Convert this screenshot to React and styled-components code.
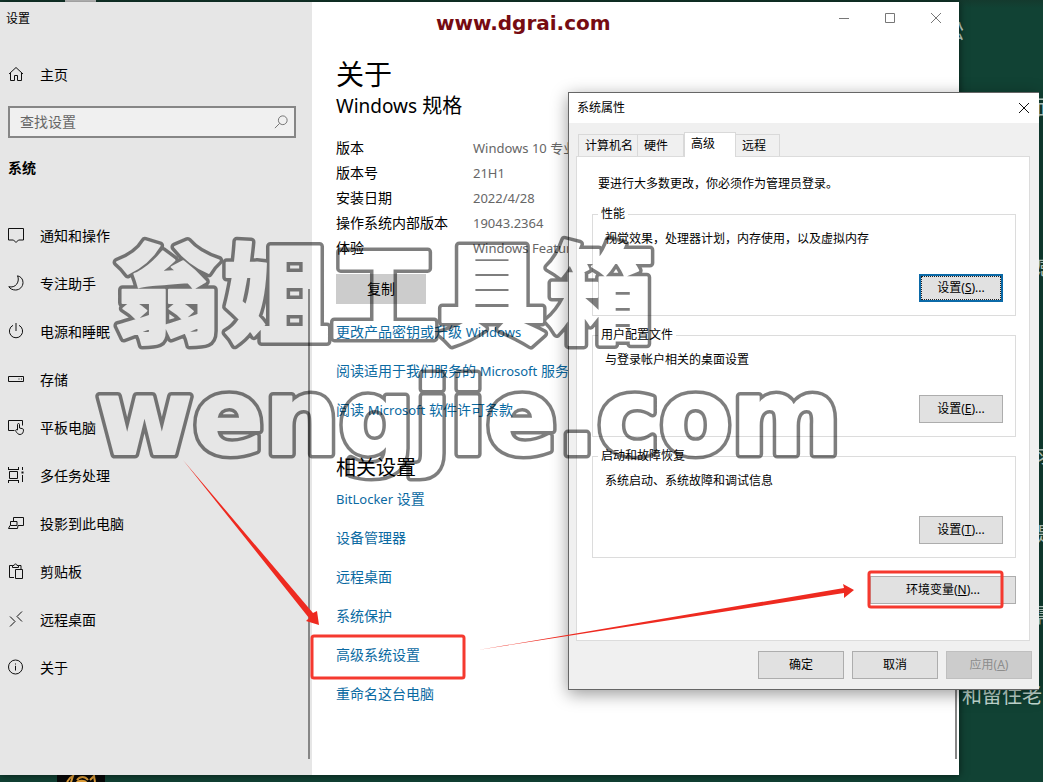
import React from "react";
import styled, { createGlobalStyle, css } from "styled-components";

const GlobalStyle = createGlobalStyle`
  *, *::before, *::after { box-sizing: border-box; }
  body {
    margin: 0;
    background: #114234;
    color: #000;
    font: 14px/20px "Noto Sans", "Noto Sans CJK SC", sans-serif;
  }
  h1, h2, p, dl, dd, ul { margin: 0; padding: 0; font-weight: 400; }
  button, input { font: inherit; color: inherit; }
`;

const Desktop = styled.div`
  position: relative;
  min-height: 100vh;
  overflow: hidden;
  background: linear-gradient(#143a2e 0, #114234 8px, #114234 100%);
`;

const DesktopLabel = styled.span`
  position: absolute;
  top: ${(p) => p.$top}px;
  left: ${(p) => p.$left}px;
  font-size: 20px;
  line-height: 24px;
  white-space: nowrap;
  color: #c4dcd3;
`;

const TopSliver = styled.div`
  position: absolute;
  top: 0;
  left: 65px;
  width: 31px;
  height: 2px;
  background: #dcdcdc;
`;

const TaskIcon = styled.svg`
  position: absolute;
  left: 57px;
  bottom: 0;
  width: 48px;
  height: 7px;
  background: #080808;
`;

const SettingsWindow = styled.section`
  position: absolute;
  top: 2px;
  left: 0;
  right: 84px;
  bottom: 7px;
  display: flex;
  background: #fff;
  box-shadow: 0 0 8px rgba(0, 0, 0, 0.6);
`;

const Sidebar = styled.aside`
  position: relative;
  flex: 0 0 312px;
  background: #e6e6e6;
`;

const ScrollThumb = styled.div`
  position: absolute;
  top: 287px;
  right: 2px;
  bottom: 16px;
  width: 2px;
  background: #868686;
`;

const WindowTitle = styled.div`
  height: 32px;
  padding-left: 6px;
  font-size: 12px;
  line-height: 34px;
`;

const NavLink = styled.a`
  display: flex;
  align-items: center;
  gap: 16px;
  height: 48px;
  padding-left: 8px;
  color: #000;
  text-decoration: none;
  svg { flex: none; margin-bottom: 2px; }
`;

const HomeRow = styled.div`
  padding: 17px 0 7px;
`;

const SearchBox = styled.label`
  display: flex;
  align-items: center;
  height: 32px;
  margin: 0 16px 0 8px;
  padding: 0 6px 0 10px;
  border: 2px solid #868686;
  background: #f0f0f0;
`;

const SearchInput = styled.input`
  flex: 1;
  min-width: 0;
  padding: 0;
  border: 0;
  outline: 0;
  background: transparent;
  &::placeholder { color: #666; opacity: 1; }
`;

const SidebarHeading = styled.h2`
  margin: 6px 0 20px;
  padding-left: 8px;
  font-size: 14px;
  font-weight: 700;
  line-height: 48px;
`;

const NavList = styled.ul`
  list-style: none;
`;

const Main = styled.main`
  position: relative;
  flex: 1;
  min-width: 0;
  overflow: hidden;
`;

const CaptionBar = styled.div`
  display: flex;
  justify-content: flex-end;
  height: 32px;
`;

const CaptionButton = styled.button`
  display: grid;
  place-items: center;
  width: 46px;
  padding: 0;
  border: 0;
  background: transparent;
`;

const Content = styled.div`
  padding: 21px 24px 0;
  white-space: nowrap;
`;

const PageTitle = styled.h1`
  font-size: 28px;
  line-height: 38px;
`;

const SectionTitle = styled.h2`
  padding-top: 2px;
  font-size: 20px;
  line-height: 22px;
`;

const SpecList = styled.dl`
  display: grid;
  grid-template-columns: 137px 1fr;
  grid-auto-rows: 25px;
  align-items: center;
  margin-top: 18px;
  dd { font-size: 13px; color: #666; }
`;

const CopyButton = styled.button`
  width: 90px;
  height: 30px;
  margin: 14px 0 8px;
  padding: 0;
  border: 0;
  background: #ccc;
`;

const LinkGroup = styled.div`
  display: flex;
  flex-direction: column;
  align-items: flex-start;
  margin-bottom: ${(p) => p.$space || 0}px;
`;

const ActionLink = styled.a`
  font-size: 14px;
  line-height: 39px;
  color: #0b6aa2;
  text-decoration: none;
`;

const Latin = styled.span`
  font-size: ${(p) => p.$size || 13}px;
  line-height: 1;
`;

const Dialog = styled.section`
  position: absolute;
  top: 92px;
  left: 568px;
  right: 4px;
  border: 1px solid #666;
  border-right: 0;
  background: #f0f0f0;
  box-shadow: 0 4px 16px rgba(0, 0, 0, 0.4);
  font-size: 12px;
  line-height: 16px;
`;

const DialogTitleBar = styled.header`
  display: flex;
  justify-content: space-between;
  align-items: center;
  height: 30px;
  padding-left: 8px;
  background: #fff;
`;

const DialogClose = styled.button`
  display: grid;
  place-items: center;
  width: 30px;
  height: 30px;
  padding: 0;
  border: 0;
  background: transparent;
`;

const Tabs = styled.div`
  display: flex;
  align-items: flex-end;
  height: 33px;
  padding-left: 9px;
`;

const Tab = styled.button`
  position: relative;
  width: ${(p) => p.$width}px;
  height: 22px;
  padding: 0 0 0 6px;
  border: 1px solid #d9d9d9;
  border-bottom: 0;
  border-left-width: ${(p) => (p.$first ? 1 : 0)}px;
  background: #f0f0f0;
  text-align: left;
  ${(p) =>
    p.$active &&
    css`
      z-index: 1;
      height: 25px;
      margin-bottom: -1px;
      padding-bottom: 2px;
      background: #fff;
    `}
`;

const Panel = styled.div`
  margin: 0 9px 0 7px;
  padding: 19px 13px 36px 15px;
  border: 1px solid #dcdcdc;
  background: #fff;
`;

const Notice = styled.p`
  margin: 0 0 14px 6px;
`;

const Group = styled.fieldset`
  min-width: 0;
  margin: 0 0 11px;
  padding: 0 12px 13px 5px;
  border: 1px solid #dcdcdc;
  legend { padding: 0 3px; }
  p { margin: 9px 0 27px 7px; }
`;

const ButtonRow = styled.div`
  display: flex;
  justify-content: flex-end;
  gap: ${(p) => p.$gap || 0}px;
  padding: ${(p) => p.$padding || 0};
`;

const PushButton = styled.button`
  width: ${(p) => p.$width}px;
  height: 28px;
  padding: 0;
  border: 1px solid #adadad;
  background: #e1e1e1;
  line-height: 16px;
  ${(p) =>
    p.$focused &&
    css`
      border: 2px solid #0b6aa8;
      outline: 1px dotted #222;
      outline-offset: -3px;
    `}
  &:disabled { border-color: #bfbfbf; background: #ccc; color: #8d8d8d; }
`;

const SiteMark = styled.div`
  position: absolute;
  top: 11px;
  left: 436px;
  font: 700 20px/24px "DejaVu Sans", sans-serif;
  color: #760b12;
`;

const Overlay = styled.svg`
  position: absolute;
  top: 0;
  left: 0;
  pointer-events: none;
`;

const Icon = ({ children, size = 16 }) => (
  <svg width={size} height={size} viewBox="0 0 16 16" fill="none" stroke="#111" strokeWidth="1" aria-hidden="true">
    {children}
  </svg>
);

const NAV = [
  ["通知和操作", <path d="M.5 1.500h15v11.500h-5L8 15.500 5.500 13h-5z" />],
  ["专注助手", <path d="M9.500.8c3.400.8 5.500 3.200 5.500 6.700 0 4.200-3.300 7.500-7.500 7.500-3 0-5.400-1.200-6.700-3.300 3 .8 6.200-.2 7.900-2.500C10.500 6.600 10.800 3.500 9.500.8z" />],
  ["电源和睡眠", <><path d="M5 2.300a6.600 6.600 0 1 0 6 0" /><path d="M8 0v8" /></>],
  ["存储", <><path d="M.5 5.500h15v5H.5z" /><path d="M10.500 8h1M13 8h1" /></>],
  ["平板电脑", <><path d="M6.500 11.500h-6v-10h14v5" /><path d="M9.500 11V5.500c0-1.300 2-1.300 2 0V9l3 .7c.8.200 1 .7 1 1.400 0 2-1 4.400-3.400 4.400-1.800 0-2.800-1-4.200-3.200-.8-1.300.5-2.300 1.600-1.300z" /></>],
  ["多任务处理", <><path d="M0 2.500h11M.5 0v2.500M10.500 0v2.500M1.500 4.500h8v7h-8zM0 13.500h11M.5 13.500V16M10.500 13.500V16M14.500 0v3M14.500 8v7" /><path d="M13.500 5.500h2" strokeWidth="2" /></>],
  ["投影到此电脑", <><path d="M5.500 6V2.500h10v8H10" /><path d="M2.500 6.500h6.500v4H2.500zM2 10.500l-1.500 3h9l.500-3" /></>],
  ["剪贴板", <><path d="M6 14.500H1.500v-12h3M10.500 2.500H13V6" /><path d="M4.500 4.500v-2H6c0-2 3-2 3 0h1.500v2zM7.500 6.500h7v9h-7z" /></>],
  ["远程桌面", <path d="M2 5.500l5 5-5 5M14 .5l-5 5 5 5" />],
  ["关于", <><circle cx="7.500" cy="8" r="7" /><path d="M7.500 6.800v4.700M7.500 4.500v1" /></>],
];

const SPECS = [
  ["版本", "Windows 10 专业版"],
  ["版本号", "21H1"],
  ["安装日期", "2022/4/28"],
  ["操作系统内部版本", "19043.2364"],
  ["体验", "Windows Feature Experience Pack"],
];

const RELATED = ["设备管理器", "远程桌面", "系统保护", "高级系统设置", "重命名这台电脑"];

const GROUPS = [
  ["性能", "视觉效果，处理器计划，内存使用，以及虚拟内存", "S"],
  ["用户配置文件", "与登录帐户相关的桌面设置", "E"],
  ["启动和故障恢复", "系统启动、系统故障和调试信息", "T"],
];

const MarkText = (props) => (
  <g strokeLinejoin="round" {...props}>
    <text x="114" y="334" fontSize="108" fontWeight="900" fontFamily="Noto Sans CJK SC, sans-serif">翁姐工具箱</text>
    <text x="96" y="454" fontSize="105" fontWeight="700" fontFamily="DejaVu Sans, sans-serif">wengjie.com</text>
  </g>
);

export default function App() {
  return (
    <Desktop>
      <GlobalStyle />
      <TopSliver />
      <DesktopLabel $top={20} $left={944}>松</DesktopLabel>
      <DesktopLabel $top={96} $left={1036}>面</DesktopLabel>
      <DesktopLabel $top={256} $left={1036}>感</DesktopLabel>
      <DesktopLabel $top={444} $left={1036}>求</DesktopLabel>
      <DesktopLabel $top={523} $left={1036}>是</DesktopLabel>
      <DesktopLabel $top={604} $left={1036}>需</DesktopLabel>
      <DesktopLabel $top={684} $left={962}>和留住老</DesktopLabel>
      <TaskIcon viewBox="0 0 48 7" aria-hidden="true">
        <path d="M10 7l3-4 3-2-2 6M20 5c3-4 8-4 11 0M33 5l4-4 1 6" fill="none" stroke="#e5a23a" strokeWidth="2" />
        <path d="M19 7c1-3 10-3 11 0z" fill="#e5a23a" />
      </TaskIcon>

      <SettingsWindow aria-label="设置">
        <Sidebar>
          <WindowTitle>设置</WindowTitle>
          <HomeRow>
            <NavLink href="#home">
              <Icon><path d="M1 8l7-6.500L15 8M2.500 7v7.500h4v-5h3v5h4V7" /></Icon>
              主页
            </NavLink>
          </HomeRow>
          <SearchBox>
            <SearchInput type="text" placeholder="查找设置" aria-label="查找设置" />
            <Icon size={14}><g stroke="#666"><circle cx="10" cy="6" r="5" /><path d="M6.500 9.500L1 15" /></g></Icon>
          </SearchBox>
          <SidebarHeading>系统</SidebarHeading>
          <NavList>
            {NAV.map(([label, icon]) => (
              <li key={label}>
                <NavLink href="#nav"><Icon>{icon}</Icon>{label}</NavLink>
              </li>
            ))}
          </NavList>
          <ScrollThumb />
        </Sidebar>

        <Main>
          <CaptionBar>
            <CaptionButton aria-label="最小化"><svg width="10" height="10" stroke="#777" fill="none"><path d="M0 5.500h10" /></svg></CaptionButton>
            <CaptionButton aria-label="最大化"><svg width="10" height="10" stroke="#777" fill="none"><path d="M.5.5h9v9h-9z" /></svg></CaptionButton>
            <CaptionButton aria-label="关闭"><svg width="10" height="10" stroke="#777" fill="none"><path d="M0 0l10 10M10 0L0 10" /></svg></CaptionButton>
          </CaptionBar>
          <Content>
            <PageTitle>关于</PageTitle>
            <SectionTitle><Latin $size={19}>Windows</Latin> 规格</SectionTitle>
            <SpecList>
              {SPECS.map(([name, value]) => (
                <React.Fragment key={name}><dt>{name}</dt><dd>{value}</dd></React.Fragment>
              ))}
            </SpecList>
            <CopyButton>复制</CopyButton>
            <LinkGroup $space={26}>
              <ActionLink href="#key">更改产品密钥或升级 <Latin>Windows</Latin></ActionLink>
              <ActionLink href="#terms">阅读适用于我们服务的 <Latin>Microsoft</Latin> 服务协议</ActionLink>
              <ActionLink href="#license">阅读 <Latin>Microsoft</Latin> 软件许可条款</ActionLink>
            </LinkGroup>
            <SectionTitle>相关设置</SectionTitle>
            <LinkGroup>
              <ActionLink href="#bitlocker"><Latin>BitLocker</Latin> 设置</ActionLink>
              {RELATED.map((label) => <ActionLink href="#related" key={label}>{label}</ActionLink>)}
            </LinkGroup>
          </Content>
          <ScrollThumb />
        </Main>
      </SettingsWindow>

      <Dialog role="dialog" aria-label="系统属性">
        <DialogTitleBar>
          系统属性
          <DialogClose aria-label="关闭"><svg width="10" height="10" stroke="#111" fill="none"><path d="M0 0l10 10M10 0L0 10" /></svg></DialogClose>
        </DialogTitleBar>
        <Tabs role="tablist">
          <Tab role="tab" $width={60} $first>计算机名</Tab>
          <Tab role="tab" $width={46}>硬件</Tab>
          <Tab role="tab" $width={52} $active $first aria-selected="true">高级</Tab>
          <Tab role="tab" $width={44}>远程</Tab>
        </Tabs>
        <Panel role="tabpanel">
          <Notice>要进行大多数更改，你必须作为管理员登录。</Notice>
          {GROUPS.map(([title, text, hotkey], i) => (
            <Group key={title}>
              <legend>{title}</legend>
              <p>{text}</p>
              <ButtonRow>
                <PushButton $width={84} $focused={i === 0}>设置(<u>{hotkey}</u>)...</PushButton>
              </ButtonRow>
            </Group>
          ))}
          <ButtonRow $padding="7px 0 0">
            <PushButton $width={146}>环境变量(<u>N</u>)...</PushButton>
          </ButtonRow>
        </Panel>
        <ButtonRow $gap={8} $padding="10px 7px 10px">
          <PushButton $width={86}>确定</PushButton>
          <PushButton $width={86}>取消</PushButton>
          <PushButton $width={86} disabled>应用(<u>A</u>)</PushButton>
        </ButtonRow>
      </Dialog>

      <SiteMark>www.dgrai.com</SiteMark>

      <Overlay width="1043" height="782" viewBox="0 0 1043 782">
        <defs>
          <mask id="hollow" maskUnits="userSpaceOnUse" x="0" y="0" width="1043" height="782">
            <rect width="1043" height="782" fill="#fff" />
            <MarkText fill="#000" stroke="#000" strokeWidth="2" aria-hidden="true" />
          </mask>
        </defs>
        <g opacity="0.5" mask="url(#hollow)">
          <MarkText fill="#000" stroke="#000" strokeWidth="9" />
        </g>
        <g fill="none" stroke="#f5392f" strokeWidth="3">
          <rect x="312" y="636" width="152" height="42" rx="2" />
          <rect x="869" y="572" width="133" height="35" rx="2" />
        </g>
        <g fill="#ee2a20">
          <path d="M183 460L313 613l4-2 2 14-13-4 3-3z" />
          <path d="M478 650L844 588l-1-4 11 6-10 8 0-5z" />
        </g>
      </Overlay>
    </Desktop>
  );
}
